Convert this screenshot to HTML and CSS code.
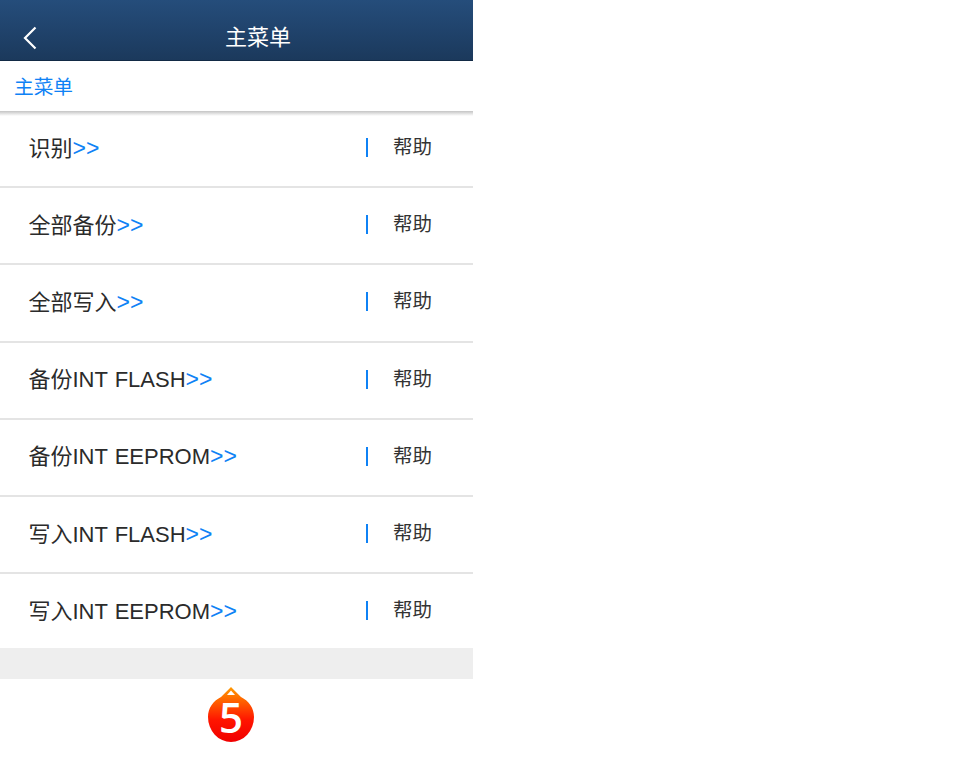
FILE: index.html
```html
<!DOCTYPE html>
<html lang="zh-CN">
<head>
    <meta charset="UTF-8">
    <meta name="viewport" content="width=device-width, initial-scale=1.0">
    <title>主菜单</title>
    <link rel="stylesheet" href="styles.css">
</head>
<body>
    <div class="page">
        <div class="header">
            <svg class="back" width="16" height="26" viewBox="0 0 16 26">
                <path d="M13.5 2.5 L3 13 L13.5 23.5" fill="none" stroke="#fff" stroke-width="2.2"/>
            </svg>
            <h1>主菜单</h1>
        </div>
        <div class="crumb">主菜单</div>
        <div class="menu">
            <div class="menu-item">
                <div class="item-name">识别<span class="arrows">&gt;&gt;</span></div>
                <div class="item-help">帮助</div>
            </div>
            <div class="menu-item">
                <div class="item-name">全部备份<span class="arrows">&gt;&gt;</span></div>
                <div class="item-help">帮助</div>
            </div>
            <div class="menu-item">
                <div class="item-name">全部写入<span class="arrows">&gt;&gt;</span></div>
                <div class="item-help">帮助</div>
            </div>
            <div class="menu-item">
                <div class="item-name">备份INT FLASH<span class="arrows">&gt;&gt;</span></div>
                <div class="item-help">帮助</div>
            </div>
            <div class="menu-item">
                <div class="item-name">备份INT EEPROM<span class="arrows">&gt;&gt;</span></div>
                <div class="item-help">帮助</div>
            </div>
            <div class="menu-item">
                <div class="item-name">写入INT FLASH<span class="arrows">&gt;&gt;</span></div>
                <div class="item-help">帮助</div>
            </div>
            <div class="menu-item">
                <div class="item-name">写入INT EEPROM<span class="arrows">&gt;&gt;</span></div>
                <div class="item-help">帮助</div>
            </div>
        </div>
        <div class="band"></div>
        <div class="footer">
            <div class="badge">
                <svg width="48" height="57" viewBox="0 0 48 57">
                    <defs>
                        <linearGradient id="drop" x1="0" y1="0" x2="0" y2="1">
                            <stop offset="0" stop-color="#ff9a00"/>
                            <stop offset="0.6" stop-color="#ff1500"/>
                            <stop offset="1" stop-color="#f00000"/>
                        </linearGradient>
                    </defs>
                    <path d="M24 1 L34 11 C42 15 47 22 47 31 A23 25 0 0 1 1 31 C1 22 6 15 14 11 Z" fill="url(#drop)"/>
                    <path d="M24 4.500 L28 9 L20 9 Z" fill="#fff"/>
                </svg>
                <span class="badge-num">5</span>
            </div>
        </div>
    </div>
</body>
</html>
```

FILE: styles.css
```css
html, body {
    margin: 0;
    padding: 0;
    background-color: #fff;
}
body {
    font-family: "Liberation Sans", "Noto Sans CJK SC", sans-serif;
    color: #333;
}
.page {
    width: 473px;
}
.header {
    display: flex;
    align-items: center;
    justify-content: center;
    position: relative;
    height: 60px;
    background: linear-gradient(to bottom, #254d7b, #1b395c);
    border-bottom: 1px solid #122a45;
}
.header h1 {
    margin: 0 0 0 43px;
    padding-top: 10px;
    font-size: 22px;
    font-weight: normal;
    color: #fff;
}
.back {
    position: absolute;
    left: 22px;
    top: 25px;
}
.crumb {
    display: flex;
    align-items: center;
    height: 50px;
    padding-left: 14px;
    padding-bottom: 2px;
    box-sizing: border-box;
    font-size: 19.700px;
    color: #0f82f5;
}
.menu {
    background: linear-gradient(to bottom, #c4c4c4, #fff) top / 100% 5px no-repeat;
}
.menu-item {
    display: flex;
    align-items: center;
    justify-content: space-between;
    height: 75.200px;
    border-bottom: 2px solid #e4e4e4;
}
.menu-item:last-child {
    border-bottom: none;
    margin-bottom: -1px;
}
.item-name {
    padding-left: 28.500px;
    padding-bottom: 6px;
    font-size: 22px;
    word-spacing: 1px;
    color: #2b2b2b;
}
.arrows {
    color: #0f82f5;
    font-size: 23px;
}
.item-help {
    width: 107px;
    box-sizing: border-box;
    border-left: 2px solid #0f82f5;
    padding-left: 25px;
    margin-bottom: 2px;
    font-size: 19.500px;
    line-height: 19px;
    color: #333;
}
.band {
    height: 31px;
    background-color: #eee;
}
.footer {
    display: flex;
    justify-content: center;
    padding: 7px 0 0 0;
    margin-left: -11px;
}
.badge {
    position: relative;
    width: 48px;
    height: 57px;
}
.badge-num {
    position: absolute;
    left: 0;
    right: 0;
    top: 6px;
    text-align: center;
    font-family: "Open Sans", sans-serif;
    font-size: 42px;
    font-weight: 600;
    line-height: 50px;
    color: #fff;
}
```
